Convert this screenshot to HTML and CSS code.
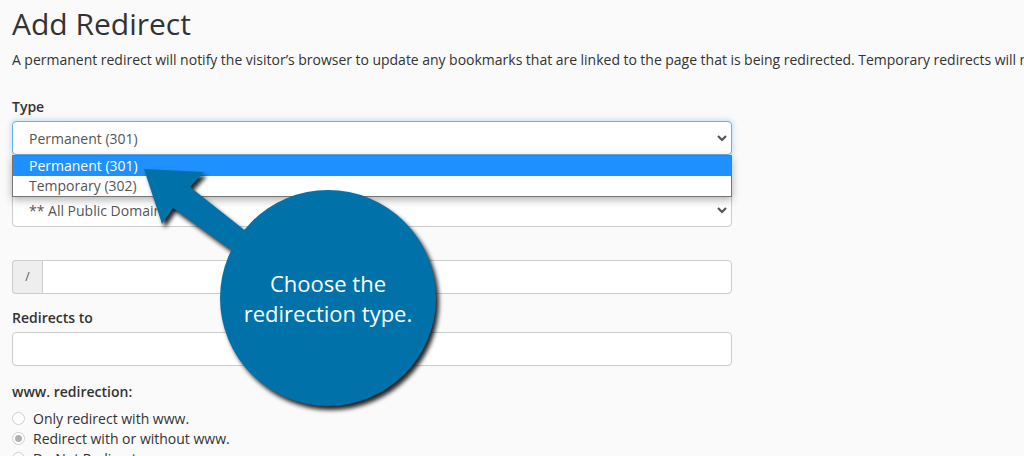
FILE: index.html
```html
<!DOCTYPE html>
<html lang="en">
<head>
    <meta charset="UTF-8">
    <title>Add Redirect</title>
    <link rel="stylesheet" href="styles.css">
</head>
<body>
    <h1 class="title">Add Redirect</h1>
    <p class="intro">A permanent redirect will notify the visitor’s browser to update any bookmarks that are linked to the page that is being redirected. Temporary redirects will not update the visitor’s bookmarks.</p>

    <div class="form">
        <div class="group group-type">
            <label class="field-label">Type</label>
            <div class="select focused">
                <span>Permanent (301)</span>
                <svg class="chevron" width="10" height="8" viewBox="0 0 10 8"><path d="M1 2 L5 6 L9 2" fill="none" stroke="#555" stroke-width="2.2"/></svg>
            </div>
            <ul class="dropdown">
                <li class="active">Permanent (301)</li>
                <li>Temporary (302)</li>
            </ul>
        </div>

        <div class="group group-domain">
            <label class="field-label">https?://(www.)?</label>
            <div class="select">
                <span>** All Public Domains **</span>
                <svg class="chevron" width="10" height="8" viewBox="0 0 10 8"><path d="M1 2 L5 6 L9 2" fill="none" stroke="#555" stroke-width="2.2"/></svg>
            </div>
        </div>

        <div class="group group-path">
            <div class="input-group">
                <span class="addon">/</span>
                <input type="text" class="input">
            </div>
        </div>

        <div class="group group-target">
            <label class="field-label">Redirects to</label>
            <input type="text" class="input full">
        </div>

        <div class="group">
            <label class="field-label">www. redirection:</label>
            <div class="radios">
                <label class="radio"><span class="dot"></span>Only redirect with www.</label>
                <label class="radio"><span class="dot checked"></span>Redirect with or without www.</label>
                <label class="radio"><span class="dot"></span>Do Not Redirect www.</label>
            </div>
        </div>
    </div>

    <div class="callout">
        <svg class="callout-shape" width="1024" height="456" viewBox="0 0 1024 456">
            <g class="bubble">
                <polygon points="144,169 204,172 190,187 252,236 234,252 173,208 162,224"/>
                <circle cx="328" cy="298" r="108"/>
            </g>
        </svg>
        <div class="callout-text">Choose the<br>redirection type.</div>
    </div>
</body>
</html>
```

FILE: styles.css
```css
html, body {
    overflow: hidden;
}

body {
    margin: 0;
    padding: 0 12px;
    background-color: #fafafa;
    color: #333;
    font-family: "Open Sans", "Liberation Sans", sans-serif;
    font-size: 14px;
    height: 456px;
}

.title {
    margin: 7px 0 0;
    font-size: 30px;
    font-weight: 400;
    line-height: 33px;
}

.intro {
    margin: 10px -12px 0 0;
    line-height: 20px;
    white-space: nowrap;
    overflow: hidden;
    word-spacing: -0.15px;
}

.form {
    width: 720px;
    margin-top: 27px;
}

.group {
    position: relative;
    margin-bottom: 14px;
}

.field-label {
    display: block;
    font-weight: 600;
    line-height: 20px;
    margin-bottom: 4px;
}

.select {
    display: flex;
    align-items: center;
    justify-content: space-between;
    height: 32px;
    padding: 0 4px 0 16px;
    border: 1px solid #ccc;
    border-radius: 4px;
    background-color: #fff;
    color: #555;
}

.select.focused {
    border-color: #66afe9;
    box-shadow: 0 0 6px rgba(102, 175, 233, 0.5);
}

.dropdown {
    position: absolute;
    left: 0;
    right: 0;
    top: 58px;
    margin: 0;
    padding: 0;
    list-style: none;
    background-color: #fff;
    border: 1px solid #767676;
    box-shadow: 0 3px 8px rgba(0, 0, 0, 0.3);
    z-index: 2;
}

.dropdown li {
    height: 20px;
    line-height: 20px;
    padding-left: 16px;
    color: #555;
}

.dropdown li.active {
    background-color: #1e90ff;
    color: #fff;
}

.group-path {
    margin-top: 33px;
    margin-bottom: 14px;
}

.group-target {
    margin-bottom: 16px;
}

.input-group {
    display: flex;
}

.addon {
    width: 29px;
    height: 32px;
    line-height: 32px;
    text-align: center;
    font-size: 12px;
    background-color: #eee;
    border: 1px solid #ccc;
    border-right: 0;
    border-radius: 4px 0 0 4px;
    color: #555;
}

.input {
    flex: 1;
    box-sizing: border-box;
    height: 34px;
    margin: 0;
    border: 1px solid #ccc;
    border-radius: 0 4px 4px 0;
    background-color: #fff;
}

.input.full {
    display: block;
    width: 100%;
    border-radius: 4px;
}

.radios {
    margin-top: 6px;
}

.radio {
    display: flex;
    align-items: center;
    height: 20px;
}

.dot {
    width: 11px;
    height: 11px;
    border: 1px solid #cfcfcf;
    border-radius: 50%;
    background-color: #fff;
    margin-right: 8px;
}

.dot.checked {
    background: radial-gradient(circle, #b0b0b0 0 3px, #fff 4px);
}

.callout {
    position: absolute;
    left: 0;
    top: 0;
    width: 1024px;
    height: 456px;
    pointer-events: none;
    z-index: 5;
}

.callout-shape {
    display: block;
}

.bubble {
    fill: #0072a9;
    filter: drop-shadow(3px 4px 2px rgba(0, 0, 0, 0.85));
}

.callout-text {
    position: absolute;
    left: 220px;
    width: 216px;
    top: 268px;
    text-align: center;
    color: #fff;
    font-size: 22px;
    line-height: 30px;
}
```
